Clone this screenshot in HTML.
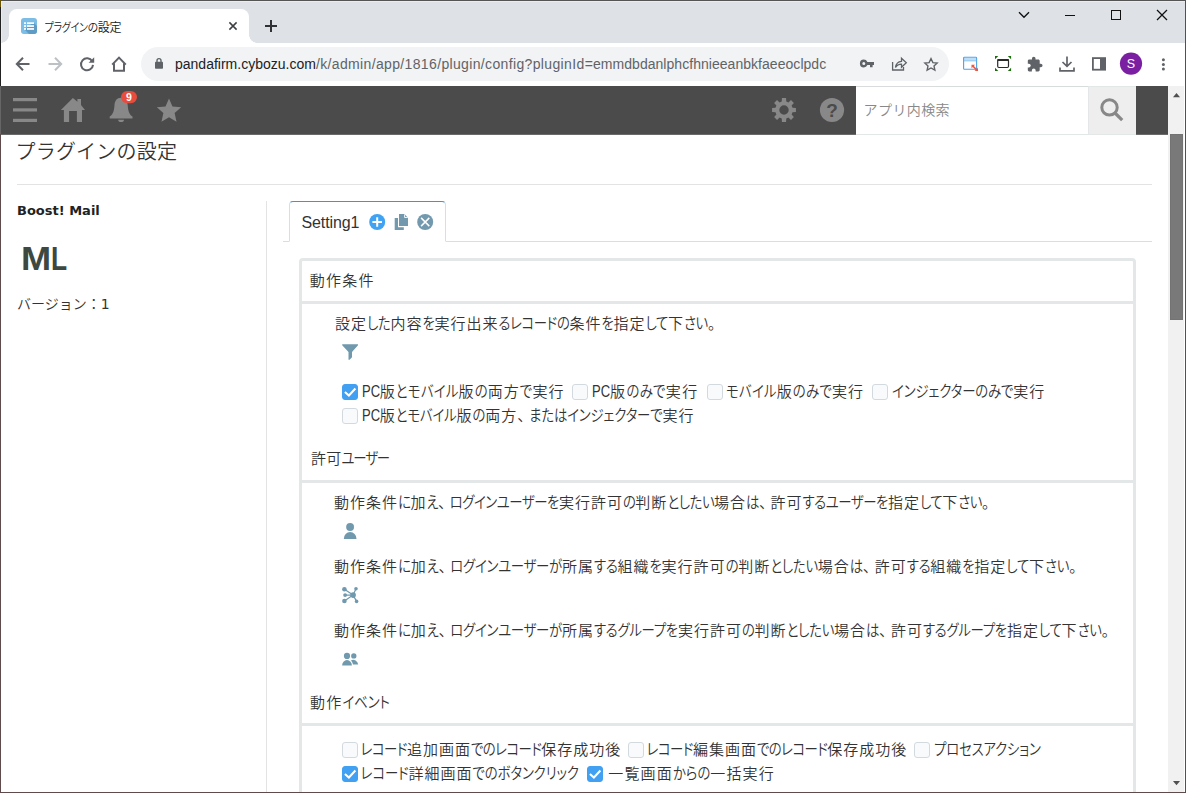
<!DOCTYPE html>
<html lang="ja">
<head>
<meta charset="utf-8">
<title>プラグインの設定</title>
<style>
*{box-sizing:border-box;margin:0;padding:0}
html,body{width:1186px;height:793px;overflow:hidden;background:#fff}
body{position:relative;font-family:"Liberation Sans","Noto Sans CJK JP",sans-serif;color:#333}
.abs{position:absolute}
#frame{position:absolute;left:0;top:0;width:1186px;height:793px;border:1px solid #5f4b4b;border-top-color:#555;pointer-events:none;z-index:50}
/* chrome */
#tabstrip{left:0;top:0;width:1186px;height:43px;background:#dee1e6}
#tab{left:9px;top:9px;width:240px;height:34px;background:#fff;border-radius:8px 8px 0 0}
#tab:before,#tab:after{content:"";position:absolute;bottom:0;width:8px;height:8px;background:radial-gradient(circle at 0 0,rgba(255,255,255,0) 7.5px,#fff 8px)}
#tab:before{left:-8px}
#tab:after{right:-8px;transform:scaleX(-1)}
#toolbar{left:0;top:43px;width:1186px;height:43px;background:#fff}
#omni{left:141px;top:47px;width:808px;height:34px;border-radius:17px;background:#f1f3f4}
.jp{font-family:"Liberation Sans","Noto Sans CJK JP",sans-serif;font-feature-settings:"palt"}
.t{position:absolute;white-space:nowrap;line-height:1}
/* kintone */
#khead{left:0;top:86px;width:1168px;height:49px;background:#4b4b4b;border-bottom:1px solid #6a6a6a}
#ksearch{left:856px;top:86px;width:232px;height:49px;background:#fff;border-top:1px solid #d8dcdd;border-bottom:1px solid #e3e7e8}
#ksbtn{left:1088px;top:86px;width:48px;height:49px;background:#eee;border:1px solid #e3e7e8;border-right:0}
#sbar{left:1168px;top:86px;width:16px;height:706px;background:#f1f1f1}
#sthumb{left:1170px;top:134px;width:13px;height:186px;background:#797979;border:1px solid #737373}
.s16{font-size:15px;line-height:20px;color:#333;letter-spacing:calc(1px + var(--b,0px));font-weight:350;margin-top:-.3px}
.s16 .ka{display:inline-block;font-size:13.4px;transform:scaleY(1.17);transform-origin:0 76%;letter-spacing:calc(-0.3px + var(--a,0px))}
.s16 .hi{display:inline-block;font-size:13.4px;transform:scaleY(1.15);transform-origin:0 76%;letter-spacing:calc(-0.3px + var(--a,0px))}
.u{font-size:14px;line-height:16px;color:#5f6368}
.s16 .pu{letter-spacing:calc(4.2px + var(--a,0px))}
.s16 .la{display:inline-block;font-size:16.3px;font-weight:400;transform:scaleX(.8);transform-origin:0 50%;margin-right:-4.6px;letter-spacing:0}
.hl{position:absolute;height:1px;background:#e3e3e3}
.box{position:absolute;border:3px solid #e3e7e8;background:#fff}
.cb{position:absolute;width:16px;height:16px;border:1px solid #d3dadf;border-radius:3px;background:#f9fafb}
.cb.on{background:#41a0f1;border-color:#41a0f1}
</style>
</head>
<body>
<!-- ===== Browser chrome ===== -->
<div id="tabstrip" class="abs"></div>
<div id="tab" class="abs"></div>
<div id="toolbar" class="abs"></div>
<div id="omni" class="abs"></div>

<!-- ===== kintone header ===== -->
<div id="khead" class="abs"></div>
<div id="ksearch" class="abs"></div>
<div id="ksbtn" class="abs"></div>
<div id="sbar" class="abs"></div>
<div id="sthumb" class="abs"></div>

<div class="t jp" id="tabt" style="left:44.5px;top:20.5px;font-size:12px;line-height:15px;color:#202124;font-weight:350;letter-spacing:-0.3px"><span class="ka" style="display:inline-block;font-size:10px;transform:scaleY(1.2);transform-origin:0 72%">プラグイン</span><span class="hi" style="display:inline-block;font-size:10.8px;transform:scaleY(1.11);transform-origin:0 72%">の</span>設定</div>
<div class="t u" id="u1" style="left:175px;top:56px;color:#202124">pandafirm.cybozu.com</div>
<div class="t u" id="u2" style="left:316px;top:56px;letter-spacing:.35px">/k/admin/app/1816/plugin/config?pluginId</div>
<div class="t u" id="u3" style="left:584.8px;top:56px;letter-spacing:.04px">=emmdbdanlphcfhnieeanbkfaeeoclpdc</div>
<div class="t" id="ph" style="left:863.6px;top:101px;font-size:14px;line-height:18px;color:#888;font-weight:350;letter-spacing:0.4px">アプリ内検索</div>
<!-- ===== page ===== -->
<div id="page">
<div class="t" id="h2" style="left:15.5px;top:140px;font-size:20px;line-height:24px;color:#333;font-weight:350;letter-spacing:0.2px">プラグインの設定</div>
<div class="hl" style="left:17px;top:184px;width:1135px"></div>
<div class="t" id="pname" style="left:17px;top:203px;font-family:'DejaVu Sans','Liberation Sans',sans-serif;font-size:13px;line-height:16px;font-weight:bold;color:#222">Boost! Mail</div>
<div class="t" id="ml" style="left:21px;top:239.7px;width:60px;height:38px;font-size:33.4px;line-height:38px;font-weight:bold;color:#3c4840"><span style="position:absolute;left:0;top:0;transform:scaleX(1.083);transform-origin:0 0">M</span><span style="position:absolute;left:29.8px;top:0;transform:scaleX(.79);transform-origin:0 0">L</span></div>
<div class="t" id="ver" style="left:17px;top:295px;font-size:14px;line-height:18px;color:#333;font-weight:350;font-family:'DejaVu Sans','Noto Sans CJK JP',sans-serif">バージョン：<span style="font-weight:400">1</span></div>
<div class="abs" style="left:266px;top:201px;width:1px;height:592px;background:#e3e3e3"></div>
<!-- tabs -->
<div class="hl" style="left:283px;top:241px;width:869px;background:#ddd"></div>
<div class="abs" id="stab" style="left:289px;top:201px;width:157px;height:41px;background:#fff;border:1px solid #ddd;border-top:1px solid #3498db;border-bottom:1px solid #fff;border-radius:4px 4px 0 0"></div>
<div class="t" id="stabt" style="left:301.5px;letter-spacing:-.1px;top:213.3px;font-size:16px;line-height:20px;color:#333">Setting1</div>
<!-- main box -->
<div class="box" id="mainbox" style="left:299px;top:258px;width:837px;height:560px;border-radius:4px"></div>
<div class="abs sep" style="left:302px;top:301px;width:831px;height:3px;background:#e3e7e8"></div>
<div class="abs sep" style="left:302px;top:480px;width:831px;height:3px;background:#e3e7e8"></div>
<div class="abs sep" style="left:302px;top:723px;width:831px;height:3px;background:#e3e7e8"></div>
<div class="t jp s16" id="sh1" style="--a:0.267px;--b:0.267px;left:309.7px;top:271px">動作条件</div>
<div class="t jp s16" id="sh2" style="--a:-0.800px;--b:-0.800px;left:311.0px;top:449px">許可<span class="ka">ユーザー</span></div>
<div class="t jp s16" id="sh3" style="--a:0.200px;--b:0.200px;left:310.0px;top:693px">動作<span class="ka">イベント</span></div>
<div class="t jp s16" id="l1" style="--a:-0.071px;--b:0.000px;left:335.0px;top:314px">設定<span class="hi">した</span>内容<span class="hi">を</span>実行出来<span class="hi">る</span><span class="ka">レコード</span><span class="hi">の</span>条件<span class="hi">を</span>指定<span class="hi">して</span>下<span class="hi">さい</span>。</div>
<div class="cb on" style="left:342px;top:384px"></div>
<div class="t jp s16" id="c1" style="--a:0.571px;--b:0.000px;left:361.7px;top:381.5px"><span class="la">PC</span>版<span class="hi">と</span><span class="ka">モバイル</span>版<span class="hi">の</span>両方<span class="hi">で</span>実行</div>
<div class="cb" style="left:572px;top:384px"></div>
<div class="t jp s16" id="c2" style="--a:0.543px;--b:0.543px;left:592.0px;top:381.5px"><span class="la">PC</span>版<span class="hi">のみで</span>実行</div>
<div class="cb" style="left:707px;top:384px"></div>
<div class="t jp s16" id="c3" style="--a:0.571px;--b:0.000px;left:726.0px;top:382px"><span class="ka">モバイル</span>版<span class="hi">のみで</span>実行</div>
<div class="cb" style="left:872px;top:384px"></div>
<div class="t jp s16" id="c4" style="--a:0.180px;--b:0.000px;left:892.0px;top:382px"><span class="ka">インジェクター</span><span class="hi">のみで</span>実行</div>
<div class="cb" style="left:342px;top:408px"></div>
<div class="t jp s16" id="c5" style="--a:0.144px;--b:0.000px;left:361.7px;top:405.5px"><span class="la">PC</span>版<span class="hi">と</span><span class="ka">モバイル</span>版<span class="hi">の</span>両方<span class="pu">、</span><span class="hi">または</span><span class="ka">インジェクター</span><span class="hi">で</span>実行</div>
<div class="t jp s16" id="l2" style="--a:-0.157px;--b:0.000px;left:334.0px;top:493px">動作条件<span class="hi">に</span>加<span class="hi">え</span><span class="pu">、</span><span class="ka">ログインユーザー</span><span class="hi">を</span>実行許可<span class="hi">の</span>判断<span class="hi">としたい</span>場合<span class="hi">は</span><span class="pu">、</span>許可<span class="hi">する</span><span class="ka">ユーザー</span><span class="hi">を</span>指定<span class="hi">して</span>下<span class="hi">さい</span>。</div>
<div class="t jp s16" id="l3" style="--a:0.034px;--b:0.000px;left:334.0px;top:557px">動作条件<span class="hi">に</span>加<span class="hi">え</span><span class="pu">、</span><span class="ka">ログインユーザー</span><span class="hi">が</span>所属<span class="hi">する</span>組織<span class="hi">を</span>実行許可<span class="hi">の</span>判断<span class="hi">としたい</span>場合<span class="hi">は</span><span class="pu">、</span>許可<span class="hi">する</span>組織<span class="hi">を</span>指定<span class="hi">して</span>下<span class="hi">さい</span>。</div>
<div class="t jp s16" id="l4" style="--a:0.032px;--b:0.000px;left:334.0px;top:621px">動作条件<span class="hi">に</span>加<span class="hi">え</span><span class="pu">、</span><span class="ka">ログインユーザー</span><span class="hi">が</span>所属<span class="hi">する</span><span class="ka">グループ</span><span class="hi">を</span>実行許可<span class="hi">の</span>判断<span class="hi">としたい</span>場合<span class="hi">は</span><span class="pu">、</span>許可<span class="hi">する</span><span class="ka">グループ</span><span class="hi">を</span>指定<span class="hi">して</span>下<span class="hi">さい</span>。</div>
<div class="cb" style="left:342px;top:742px"></div>
<div class="t jp s16" id="e1" style="--a:-0.230px;--b:0.000px;left:360.7px;top:740px"><span class="ka">レコード</span>追加画面<span class="hi">での</span><span class="ka">レコード</span>保存成功後</div>
<div class="cb" style="left:628px;top:742px"></div>
<div class="t jp s16" id="e2" style="--a:-0.230px;--b:0.000px;left:646.7px;top:740px"><span class="ka">レコード</span>編集画面<span class="hi">での</span><span class="ka">レコード</span>保存成功後</div>
<div class="cb" style="left:914px;top:742px"></div>
<div class="t jp s16" id="e3" style="--a:0.125px;--b:0.000px;left:934.0px;top:740px"><span class="ka">プロセスアクション</span></div>
<div class="cb on" style="left:342px;top:766px"></div>
<div class="t jp s16" id="e4" style="--a:0.183px;--b:0.000px;left:360.7px;top:764px"><span class="ka">レコード</span>詳細画面<span class="hi">での</span><span class="ka">ボタンクリック</span></div>
<div class="cb on" style="left:587px;top:766px"></div>
<div class="t jp s16" id="e5" style="--a:0.200px;--b:0.200px;left:608.2px;top:764px">一覧画面<span class="hi">からの</span>一括実行</div>
</div>

<svg id="icons" class="abs" style="left:0;top:0;z-index:20" width="1186" height="793" viewBox="0 0 1186 793">
<!-- window controls -->
<g fill="none" stroke="#111" stroke-width="1">
<path d="M1019 12.300 L1024 17.300 L1029 12.300" stroke-width="1.350"/>
<path d="M1065 15.5 H1075"/>
<rect x="1111.5" y="10.5" width="9" height="9"/>
<path d="M1157 10 L1167 20 M1167 10 L1157 20" stroke-width="1.250"/>
</g>
<!-- tab favicon -->
<g>
<rect x="21" y="18" width="16" height="16" rx="3" fill="#7bbde4"/>
<path d="M33.5 22.5 L37 26 V31 a3 3 0 0 1 -3 3 H29 L24.5 29.5 Z" fill="#5f9cc5"/>
<g fill="#fff"><rect x="24" y="22.3" width="2" height="1.7"/><rect x="27" y="22.3" width="7" height="1.7"/><rect x="24" y="25.2" width="2" height="1.7"/><rect x="27" y="25.2" width="7" height="1.7"/><rect x="24" y="28.1" width="2" height="1.7"/><rect x="27" y="28.1" width="7" height="1.7"/></g>
</g>
<!-- tab close / new tab -->
<path d="M229.400 22.400 L236.600 29.600 M236.600 22.400 L229.400 29.600" stroke="#3c4043" stroke-width="1.500" fill="none"/>
<path d="M265 26 H277 M271 20 V32" stroke="#303134" stroke-width="2" fill="none"/>
<!-- nav -->
<g fill="none" stroke="#5f6368" stroke-width="2">
<path d="M29.5 64 H17.5 M23 57.7 L16.8 64 L23 70.3"/>
<path d="M48.5 64 H60.5 M55 57.7 L61.2 64 L55 70.3" stroke="#bdc1c6"/>
<path d="M92.2 61.3 A6 6 0 1 0 93 64.8"/>
<path d="M112.2 64.6 L119 57.6 L125.8 64.6 M114 63.5 V70.8 H124 V63.5"/>
</g>
<path d="M94.2 57.2 V62.8 H88.6 Z" fill="#5f6368"/>
<!-- lock -->
<g><rect x="155" y="61.8" width="8" height="7" rx="0.8" fill="#5f6368"/><path d="M157 62 V60.6 a2 2 0 0 1 4 0 V62" fill="none" stroke="#5f6368" stroke-width="1.4"/></g>
<!-- key -->
<g fill="#5f6368"><path fill-rule="evenodd" d="M863.8 59.6 a3.9 3.9 0 1 0 0 7.8 a3.9 3.9 0 0 0 3.6 -2.4 H870 V67.2 H872.6 V65 H874 V62 H867.4 A3.9 3.9 0 0 0 863.8 59.6 Z M863.8 62 a1.5 1.5 0 1 1 0 3 a1.5 1.5 0 0 1 0 -3 Z"/></g>
<!-- share -->
<g fill="none" stroke="#5f6368" stroke-width="1.3"><path d="M892.6 62 V70 H903.5 V67"/><path d="M895.5 67.5 C896 63.5 898.5 61.5 901.5 61.3 V58.3 L906.3 62.8 L901.5 67.2 V64.2 C899 64.2 897 65 895.5 67.5 Z"/></g>
<!-- star -->
<path d="M931 58.6 L932.9 62.6 L937.2 63.1 L934 66 L934.9 70.2 L931 68 L927.1 70.2 L928 66 L924.8 63.1 L929.1 62.6 Z" fill="none" stroke="#5f6368" stroke-width="1.35" stroke-linejoin="miter"/>
<!-- ext: blue window -->
<g><rect x="963.6" y="57.2" width="13" height="12" rx="0.8" fill="#fff" stroke="#4da3ea" stroke-width="1.1"/><path d="M964 59 H976.500 M964 60.800 H976.500" stroke="#6db5ef" stroke-width="0.9" fill="none"/><path d="M972.300 65.600 L977.200 70.200" stroke="#f4533c" stroke-width="1.500" fill="none"/><path d="M971.500 64.800 H975 L971.500 68.200 Z M978 71 H974.600 L978 67.700 Z" fill="#f4533c"/></g>
<!-- ext: screenshot -->
<g><rect x="997.700" y="59.600" width="10.800" height="7.900" rx="1.200" fill="#fff" stroke="#2a2a2a" stroke-width="1.200"/><rect x="997.300" y="59" width="11.600" height="2" rx="0.800" fill="#2a2a2a"/><path d="M995 56 h3.300 l-3.300 3.300 Z M1011.100 56 v3.300 l-3.300 -3.300 Z M995 71 v-3.300 l3.300 3.300 Z M1011.100 71 h-3.300 l3.300 -3.300 Z" fill="#1a6e0a"/></g>
<!-- puzzle -->
<path transform="translate(1026.4,56.1) scale(0.7)" fill="#5f6368" d="M20.5 11H19V7c0-1.100-.900-2-2-2h-4V3.500C13 2.120 11.880 1 10.500 1S8 2.120 8 3.500V5H4c-1.100 0-1.990.900-1.990 2v3.800H3.500c1.490 0 2.700 1.210 2.700 2.700s-1.210 2.700-2.700 2.700H2V20c0 1.100.900 2 2 2h3.800v-1.500c0-1.490 1.210-2.700 2.700-2.700 1.490 0 2.700 1.210 2.700 2.700V22H17c1.100 0 2-.900 2-2v-4h1.500c1.380 0 2.500-1.120 2.500-2.500S21.880 11 20.500 11z"/>
<!-- download -->
<g fill="none" stroke="#5f6368" stroke-width="1.7"><path d="M1067 56.5 V66 M1062.5 62 L1067 66.4 L1071.5 62"/><path d="M1060 67.5 V70.8 H1074 V67.5"/></g>
<!-- side panel -->
<g><rect x="1092.9" y="58.1" width="12.2" height="11.6" fill="none" stroke="#5f6368" stroke-width="1.8"/><rect x="1100" y="58" width="5.5" height="12" fill="#5f6368"/></g>
<!-- avatar -->
<circle cx="1131" cy="63.6" r="11.1" fill="#7b1fa2"/>
<text x="1131" y="68" font-family="Liberation Sans, sans-serif" font-size="12.5" fill="#fff" text-anchor="middle">S</text>
<!-- menu -->
<g fill="#5f6368"><circle cx="1163.4" cy="59.8" r="1.5"/><circle cx="1163.4" cy="64.4" r="1.5"/><circle cx="1163.4" cy="69" r="1.5"/></g>
<!-- kintone header icons -->
<g fill="#888">
<rect x="13" y="98" width="24" height="3.2"/><rect x="13" y="108.3" width="24" height="3.2"/><rect x="13" y="118.8" width="24" height="3.2"/>
<path d="M72.9 98 L77.4 101.8 V99 H81 V104.9 L85 110 H82 V122 H76.9 V111 H69.1 V122 H63.9 V110 H60.9 Z"/>
<path d="M121 97.8 C125.2 97.8 127.400 101 127.700 105 C128.100 111 129.200 114.300 132.500 116.600 V118.500 H109.700 V116.600 C113 114.300 114.100 111 114.500 105 C114.800 101 116.800 97.800 121 97.800 Z M118.200 119.700 H124 a2.900 2.400 0 0 1 -5.800 0 Z"/>
<path d="M169.00 98.50 L172.47 106.53 L181.17 107.34 L174.61 113.12 L176.52 121.66 L169.00 117.20 L161.48 121.66 L163.39 113.12 L156.83 107.34 L165.53 106.53 Z"/>
</g>
<!-- badge -->
<rect x="121" y="91" width="16" height="12.2" rx="6.1" fill="#e74c3c"/>
<text x="129" y="100.700" font-family="Liberation Sans, sans-serif" font-size="10.5" font-weight="bold" fill="#fff" text-anchor="middle">9</text>
<!-- gear -->
<g transform="translate(784,110)" fill="#888">
<path fill-rule="evenodd" d="M8.50 -2.26 L11.93 -2.05 L11.93 2.05 L8.50 2.26 L7.61 4.41 L9.88 6.99 L6.99 9.88 L4.41 7.61 L2.26 8.50 L2.05 11.93 L-2.05 11.93 L-2.26 8.50 L-4.41 7.61 L-6.99 9.88 L-9.88 6.99 L-7.61 4.41 L-8.50 2.26 L-11.93 2.05 L-11.93 -2.05 L-8.50 -2.26 L-7.61 -4.41 L-9.88 -6.99 L-6.99 -9.88 L-4.41 -7.61 L-2.26 -8.50 L-2.05 -11.93 L2.05 -11.93 L2.26 -8.50 L4.41 -7.61 L6.99 -9.88 L9.88 -6.99 L7.61 -4.41 Z M4.7 0 A4.7 4.7 0 1 0 -4.7 0 A4.7 4.7 0 1 0 4.7 0 Z"/>
</g>
<!-- help -->
<circle cx="832" cy="110" r="12.1" fill="#888"/>
<text x="832" y="117" font-family="Liberation Sans, sans-serif" font-size="19" font-weight="bold" fill="#4b4b4b" text-anchor="middle">?</text>
<!-- magnifier -->
<g fill="none" stroke="#888" stroke-width="3"><circle cx="1109.500" cy="107.400" r="7.700"/><path d="M1115 113 L1122.200 120.200" stroke-width="3.200"/></g>
<!-- scrollbar arrows -->
<path d="M1173 97.200 L1176.500 93 L1180 97.200 Z" fill="#505050"/>
<path d="M1173 781 L1176.500 785.200 L1180 781 Z" fill="#505050"/>
<!-- setting tab icons -->
<circle cx="377.200" cy="222" r="8" fill="#3fa2f2"/>
<path d="M372.400 222 H382 M377.200 217.200 V226.800" stroke="#fff" stroke-width="2" fill="none"/>
<g fill="#7299ae"><path d="M394.700 218.100 H398 V227.200 H403.800 V230 H394.700 Z"/><path d="M399 214.100 H404.300 L408 217.800 V226 H399 Z"/></g>
<path d="M404.600 214.400 V217.500 H407.700" stroke="#fff" stroke-width="0.9" fill="none"/>
<circle cx="425.200" cy="222" r="8" fill="#7299ae"/>
<path d="M421.100 217.900 L429.300 226.100 M429.300 217.900 L421.100 226.100" stroke="#fff" stroke-width="1.500" fill="none"/>
<!-- checks -->
<path d="M344.9 392 L348.9 395.5 L355.4 388.5" fill="none" stroke="#fff" stroke-width="2"/>
<path d="M344.9 774 L348.9 777.5 L355.4 770.5" fill="none" stroke="#fff" stroke-width="2"/>
<path d="M589.9 774 L593.9 777.5 L600.4 770.5" fill="none" stroke="#fff" stroke-width="2"/>
<!-- section icons -->
<g fill="#7099ad">
<path d="M342.200 344.200 H358 V345.300 L352 352 V357.300 L349.600 359.800 H348.500 V352 L342.200 345.300 Z"/>
<circle cx="350.100" cy="527" r="3.950"/>
<path d="M343.800 538.900 a6.350 6.800 0 0 1 12.700 0 Z"/>
<g stroke="#7099ad" stroke-width="1.200"><path d="M353.100 595.100 L344.400 589.300 M353.100 595.100 L345.100 595.100 M353.100 595.100 L344.400 601 M353.100 595.100 L356 588.800 M353.100 595.100 L356.600 601.400"/></g>
<circle cx="353.100" cy="595.100" r="2.800"/><circle cx="344.400" cy="589.300" r="2.300"/><circle cx="345.100" cy="595.100" r="1.900"/><circle cx="344.400" cy="601" r="2.300"/><circle cx="356" cy="588.800" r="1.800"/><circle cx="356.600" cy="601.400" r="1.800"/>
<circle cx="353.800" cy="655.900" r="2.650"/>
<path d="M351 664.600 V660.500 a5 5.500 0 0 1 7.200 4.100 Z"/>
</g>
<path d="M341.500 666 a5.500 6.500 0 0 1 11 0 Z" fill="#fff" stroke="#fff" stroke-width="1.400"/>
<g fill="#7099ad"><circle cx="347" cy="655.900" r="3.100"/><path d="M342.100 665.600 a4.900 5.500 0 0 1 9.800 0 Z"/></g>
</svg>
<div id="frame"></div>
<div class="abs" style="left:0;top:0;width:1px;height:793px;z-index:51;background:linear-gradient(#6b5500 0,#6b5500 7px,#222 7px,#222 86px,#666 86px,#666 134px,#5f4b4b 134px)"></div>
<div class="abs" style="left:1px;top:1px;width:1184px;height:1px;background:#e9ecf0"></div><div class="abs" style="left:1px;top:1px;width:1px;height:42px;background:#e9ecf0"></div>
</body>
</html>
